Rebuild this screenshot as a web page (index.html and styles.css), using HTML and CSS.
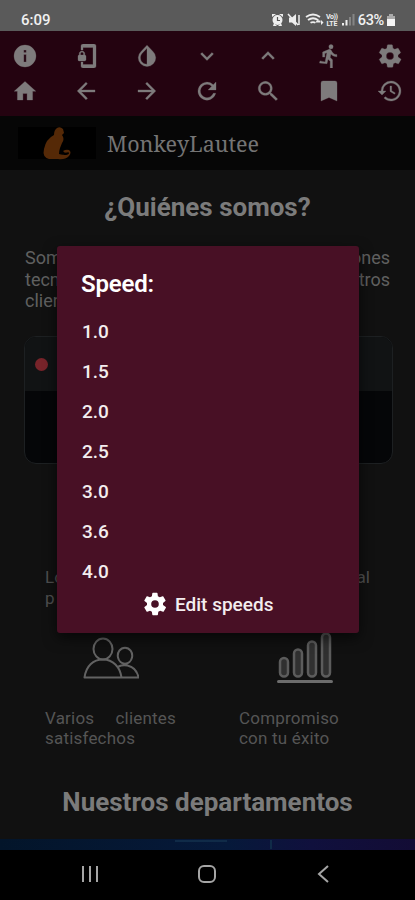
FILE: index.html
```html
<!DOCTYPE html>
<html lang="es">
<head>
<meta charset="utf-8">
<meta name="viewport" content="width=device-width, initial-scale=1">
<title>MonkeyLautee</title>
<link rel="stylesheet" href="styles.css">
</head>
<body>
<div class="phone">
  <header class="status">
    <span class="clock">6:09</span>
    <div class="status-right">
      <svg class="status-icons" viewBox="0 0 84 16" width="84" height="16">
        <g fill="#eee">
          <circle cx="6.500" cy="8" r="5"/>
          <path d="M1 5V2h4zM12 5V2H8zM2 14l1-3 3 3zM11 14l-1-3-3 3z"/>
          <path d="M18 5.500h3l4-3.500v12l-4-3.500h-3z"/>
          <path d="M45 9.500l2.500-2.500v1.500h2v2h-4.500zM50 8l2.500 2.500-2.500 2.500z"/>
          <path d="M71 11h2v2.500h-2zM74.500 8h2v5.500h-2z"/>
        </g>
        <path d="M6.500 5v3.500h2.500" fill="none" stroke="#555" stroke-width="1.200"/>
        <path d="M17 2l10 11M28 3v10" stroke="#eee" stroke-width="1.500"/>
        <g fill="none" stroke="#eee" stroke-width="1.800">
          <path d="M35 5q7-5 14 0M37 8q5-3.500 10 0M39.500 10.800q2.500-1.500 5 0"/>
        </g>
        <path d="M78 5h2v8.500h-2zM81.500 2h2v11.500h-2z" fill="#858585"/>
        <text class="tiny" x="55" y="7" textLength="12">Vo))</text>
        <text class="tiny" x="55.500" y="14" textLength="11">LTE</text>
      </svg>
      <span class="percent">63%</span>
      <svg viewBox="0 0 8 12" width="8" height="12"><path d="M2 0h4v2h2v10H0V2h2z" fill="#aaa"/><path d="M0 5h8v7H0z" fill="#f4f4f4"/></svg>
    </div>
  </header>

  <nav class="toolbar">
    <div class="tools">
      <svg viewBox="0 0 24 24"><path d="M12 1a11 11 0 1 0 0 22 11 11 0 0 0 0-22zm-1.200 5h2.400v2.400h-2.400zm0 4.500h2.400V18h-2.400z"/></svg>
      <svg viewBox="0 0 24 24"><path d="M20 0H9C7.900 0 7 .9 7 2v4h2V3.500h10v17H9V18H7v4c0 1.100.9 2 2 2h11c1.100 0 2-.9 2-2V2c0-1.100-.9-2-2-2zM10.800 11V9.500C10.800 8.100 9.400 7 8 7S5.200 8.100 5.200 9.500V11C4.600 11 4 11.600 4 12.200v3.500c0 .7.600 1.300 1.200 1.300h5.500c.7 0 1.300-.6 1.300-1.200v-3.500c0-.7-.6-1.300-1.200-1.300zm-1.300 0h-3V9.500c0-.8.700-1.300 1.500-1.300s1.500.5 1.500 1.300z"/></svg>
      <svg viewBox="0 0 24 24"><path d="M17.900 7.400 12 1.200 6.100 7.400a8.700 8.700 0 1 0 11.800 0zM12 20.200c-3.700 0-6.600-2.900-6.600-6.500 0-1.800.7-3.400 2-4.700L12 4.300z"/></svg>
      <svg viewBox="0 0 24 24"><path d="M7 8.600l5 4.900 5-4.900 1.500 1.500-6.500 6.400-6.500-6.400z"/></svg>
      <svg viewBox="0 0 24 24"><path d="M12 7.500l6.500 6.400-1.500 1.500-5-4.900-5 4.900-1.500-1.500z"/></svg>
      <svg viewBox="0 0 24 24"><path d="M14 4.900a2.200 2.200 0 1 0 0-4.400 2.200 2.200 0 0 0 0 4.400zM10 19.700l1-4.500 2.200 2V24h2.300v-8.300l-2.300-2.200.7-3.500c1.500 1.800 3.500 2.800 6 2.800v-2.200c-2 0-3.700-1-4.700-2.600l-1-1.700c-.6-.9-1.500-1.200-2.700-.7L5.600 8.100v5h2.200V9.600l2.100-.8-1.800 9.100-5.100-1-.5 2.200z"/></svg>
      <svg viewBox="0 0 24 24"><path d="M20 13.100V10.900l2.400-1.900c.2-.2.300-.5.100-.7l-2.200-3.900c-.2-.3-.5-.3-.7-.2l-2.800 1.100-1.900-1.100-.4-3c0-.3-.3-.5-.6-.5H9.900c-.3 0-.5.2-.6.500l-.4 3L7 5.300 4.300 4.200c-.3-.1-.6 0-.7.2L1.400 8.300c-.1.300-.1.600.1.700L4 10.900v2.200L1.500 15c-.2.200-.3.500-.1.700l2.200 3.900c.1.300.4.300.7.200L7 18.700l1.900 1.100.4 3c.1.300.3.500.6.500h4.400c.3 0 .5-.2.600-.5l.4-3 1.900-1.100 2.800 1.100c.2.100.5.100.7-.2l2.200-3.900c.1-.2.100-.5-.1-.7zM12 15.800a3.800 3.800 0 1 1 0-7.600 3.800 3.800 0 0 1 0 7.600z"/></svg>
    </div>
    <div class="tools">
      <svg viewBox="0 0 24 24"><path d="M9.900 21v-6.500h4.200V21h5.500v-8.800h3.200L12 2.500 1.200 12.200h3.200V21z"/></svg>
      <svg viewBox="0 0 24 24"><path d="M21 10.900H7.300l6.100-6.100L12 3.200 3.200 12l8.800 8.800 1.500-1.600-6.200-6.100H21z"/></svg>
      <svg viewBox="0 0 24 24"><path d="M3 10.900h13.700l-6.100-6.100L12 3.200l8.800 8.800-8.800 8.800-1.500-1.600 6.200-6.100H3z"/></svg>
      <svg viewBox="0 0 24 24"><path d="M18.300 5.700A9 9 0 1 0 20.700 14.300h-2.400A6.700 6.700 0 1 1 12 5.300c1.800 0 3.500.8 4.700 2l-3.600 3.600H21V3z"/></svg>
      <svg viewBox="0 0 24 24"><path d="M15.800 14.200h-.9l-.3-.3a7 7 0 1 0-.8.800l.3.300v.9l5.900 5.700 1.600-1.600zm-6.500 0a4.900 4.900 0 1 1 0-9.800 4.900 4.900 0 0 1 0 9.800z"/></svg>
      <svg viewBox="0 0 24 24"><path d="M18 2H6a2 2 0 0 0-2 2v18l8-3.500 8 3.500V4a2 2 0 0 0-2-2z"/></svg>
      <svg viewBox="0 0 24 24"><path d="M13 2A10 10 0 0 0 3 12H0l4 4 4-4H5a8 8 0 1 1 2.400 5.700l-1.500 1.400A10 10 0 1 0 13 2zm-1 5v5.500l4.500 2.700.8-1.300-3.600-2.200V7z"/></svg>
    </div>
  </nav>

  <div class="brand">
    <div class="logo"><svg viewBox="0 0 30 34" width="30" height="34"><path d="M15 2q3-2 6 1l1 4-2 2q3 4 0 8l-2 5q-1 3-1 6 5 2 8-1-3 0-4-2 3-2 6-1 3 2 0 6-4 4-11 3H7Q0 31 2 23 4 13 12 9q0-5 3-7z" fill="#552907"/><path d="M21 28q6-3 6-1t-5 2z" fill="#000"/></svg></div>
    <span class="brand-name">MonkeyLautee</span>
  </div>

  <main class="page">
    <h1>¿Quiénes somos?</h1>
    <div class="intro">
      <div>Som<br>tecn<br>clien</div>
      <div class="right">ones<br>tros</div>
    </div>
    <div class="window"><div class="window-bar"><span class="dot"></span></div></div>
    <div class="hint"><div>Lo<br>p</div><div>al</div></div>
    <div class="features">
      <div class="feature">
        <svg viewBox="0 0 56 44" width="56" height="44"><g fill="none" stroke="#626262" stroke-width="2" stroke-linejoin="round"><ellipse cx="20" cy="13" rx="9.500" ry="10.500"/><path d="M1.500 41.500C3 30 10 23.500 20 23.500S37 31 38.500 41.500zM35 21.500a7.200 8 0 1 1 14 0a7.200 8 0 0 1-14 0M35.500 30.500q4-2 9-1 9 2 11 12H38.500"/></g></svg>
        <p class="spread"><span>Varios</span><span>clientes</span></p>
        <p>satisfechos</p>
      </div>
      <div class="feature success">
        <svg viewBox="0 0 56 52" width="56" height="52"><g fill="#303030" stroke="#5c5c5c" stroke-width="2.500"><rect x="3" y="26" width="8" height="18.500" rx="4"/><rect x="17" y="17.500" width="8" height="27" rx="4"/><rect x="31" y="9.500" width="8" height="35" rx="4"/><rect x="45" y="1.500" width="8" height="43" rx="4"/></g><path d="M1.500 49.500h53" stroke="#6c6c6c" stroke-width="3" stroke-linecap="round"/></svg>
        <p>Compromiso</p>
        <p>con tu éxito</p>
      </div>
    </div>
    <h2>Nuestros departamentos</h2>
    <div class="banner"><i></i><i></i></div>
  </main>

  <footer class="system-nav">
    <svg viewBox="0 0 18 18" width="18" height="18"><path d="M2 1v16M9 1v16M16 1v16"/></svg>
    <svg viewBox="0 0 18 18" width="18" height="18"><rect x="1" y="1" width="16" height="16" rx="5"/></svg>
    <svg viewBox="0 0 18 18" width="18" height="18"><path d="M14 1 5 9l9 8"/></svg>
  </footer>

  <section class="dialog">
    <h3>Speed:</h3>
    <ul><li>1.0</li><li>1.5</li><li>2.0</li><li>2.5</li><li>3.0</li><li>3.6</li><li>4.0</li></ul>
    <div class="edit">
      <svg viewBox="0 0 24 24"><path d="M20 13.100V10.900l2.400-1.900c.2-.2.300-.5.100-.7l-2.200-3.900c-.2-.3-.5-.3-.7-.2l-2.800 1.100-1.900-1.100-.4-3c0-.3-.3-.5-.6-.5H9.900c-.3 0-.5.2-.6.500l-.4 3L7 5.300 4.300 4.200c-.3-.1-.6 0-.7.2L1.400 8.300c-.1.300-.1.600.1.700L4 10.900v2.200L1.500 15c-.2.200-.3.500-.1.700l2.200 3.900c.1.300.4.300.7.200L7 18.700l1.900 1.100.4 3c.1.300.3.500.6.500h4.400c.3 0 .5-.2.600-.5l.4-3 1.900-1.100 2.800 1.100c.2.100.5.100.7-.2l2.200-3.900c.1-.2.100-.5-.1-.7zM12 15.800a3.800 3.800 0 1 1 0-7.600 3.800 3.800 0 0 1 0 7.600z"/></svg>
      <span>Edit speeds</span>
    </div>
  </section>
</div>
</body>
</html>
```
FILE: styles.css
```css
* { box-sizing: border-box; margin: 0; padding: 0; }
body { background: #000; font-family: Roboto, "Liberation Sans", sans-serif; }
.phone { position: relative; width: 415px; height: 900px; display: flex; flex-direction: column; overflow: hidden; }

.status { height: 31px; padding: 9px 20px 0 21px; background: #5a5a5a; display: flex; justify-content: space-between; align-items: flex-start; color: #f1f1f1; }
.clock { font-size: 15px; line-height: 22px; font-weight: 500; }
.status-right { display: flex; align-items: center; height: 22px; }
.status-icons { margin-right: 3px; }
.tiny { font-size: 7px; font-weight: 700; fill: #eee; }
.percent { font-size: 14.500px; font-weight: 500; letter-spacing: -0.3px; margin-right: 3px; }

.toolbar { height: 85px; background: #240310; padding: 13px 13px 0; display: flex; flex-direction: column; gap: 11px; }
.tools { display: flex; justify-content: space-between; height: 24px; }
.tools svg { width: 24px; height: 24px; fill: #7e7b7c; stroke: #7e7b7c; stroke-width: .3; }

.brand { height: 54px; background: #060606; display: flex; align-items: center; padding-left: 18px; }
.logo { width: 78px; height: 32px; background: #000; display: flex; align-items: center; justify-content: center; }
.brand-name { margin-left: 11px; font-family: "Noto Serif", "DejaVu Serif Condensed", "DejaVu Serif", serif; font-stretch: condensed; font-size: 21.500px; color: #747474; }

.page { height: 680px; background: #111; display: flex; flex-direction: column; overflow: hidden; }
h1, h2 { text-align: center; font-weight: 700; color: #7b7b7b; }
h1 { margin-top: 21px; font-size: 26px; line-height: 32px; }
.intro { margin: 24px 25px 0; height: 66px; display: flex; justify-content: space-between; font-size: 18px; line-height: 21.500px; color: #606060; }
.right { text-align: right; }
.window { margin: 23px 22px 0 24px; height: 128px; border: 1px solid #1d2022; border-radius: 12px; background: #050608; overflow: hidden; }
.window-bar { height: 54px; background: #111314; display: flex; align-items: center; padding-left: 10px; }
.dot { width: 13px; height: 13px; border-radius: 50%; background: #78242a; }
.hint { margin: 103px 45px 0; height: 42px; display: flex; justify-content: space-between; font-size: 17px; line-height: 21px; color: #4f4f4f; }
.features { margin-top: 21px; height: 120px; display: flex; padding-left: 45px; color: #555; font-size: 17px; line-height: 20px; }
.feature { width: 131px; display: flex; flex-direction: column; letter-spacing: 0.2px; }
.feature svg { align-self: center; margin: 6px 0 28px; }
.success { margin-left: 63px; }
.success svg { margin: 2px 0 24px; }
.spread { display: flex; justify-content: space-between; }
h2 { margin-top: 36px; font-size: 26px; line-height: 32px; }
.banner { margin-top: 21px; height: 11px; flex: none; display: flex; align-items: flex-start; gap: 43px; padding: 1px 0 0 175px; background: linear-gradient(90deg, #03152a, #06193a 55%, #10103d 75%, #130c35); }
.banner i { width: 52px; height: 2px; background: #102b48; }
.banner i:last-child { width: 2px; height: 9px; }

.system-nav { flex: 1; display: flex; justify-content: space-between; align-items: center; padding: 0 83px 2px 81px; background: #000; }
.system-nav svg { fill: none; stroke: #a5a5a5; stroke-width: 2; }

.dialog { position: absolute; left: 57px; top: 246px; width: 302px; height: 387px; padding: 22px 25px 0 24px; border-radius: 3px; background: #481025; color: #f3edef; box-shadow: 0 5px 14px rgba(0, 0, 0, .6); }
.dialog h3 { font-size: 24px; line-height: 32px; font-weight: 600; letter-spacing: -0.2px; color: #fff; }
.dialog ul { list-style: none; margin-top: 12px; padding-left: 1px; }
.dialog li { font-size: 19px; line-height: 40px; font-weight: 500; }
.edit { display: flex; align-items: center; height: 24px; padding-left: 62px; font-size: 19px; font-weight: 500; }
.edit svg { width: 24px; height: 24px; margin-right: 8px; fill: #fff; }
```
